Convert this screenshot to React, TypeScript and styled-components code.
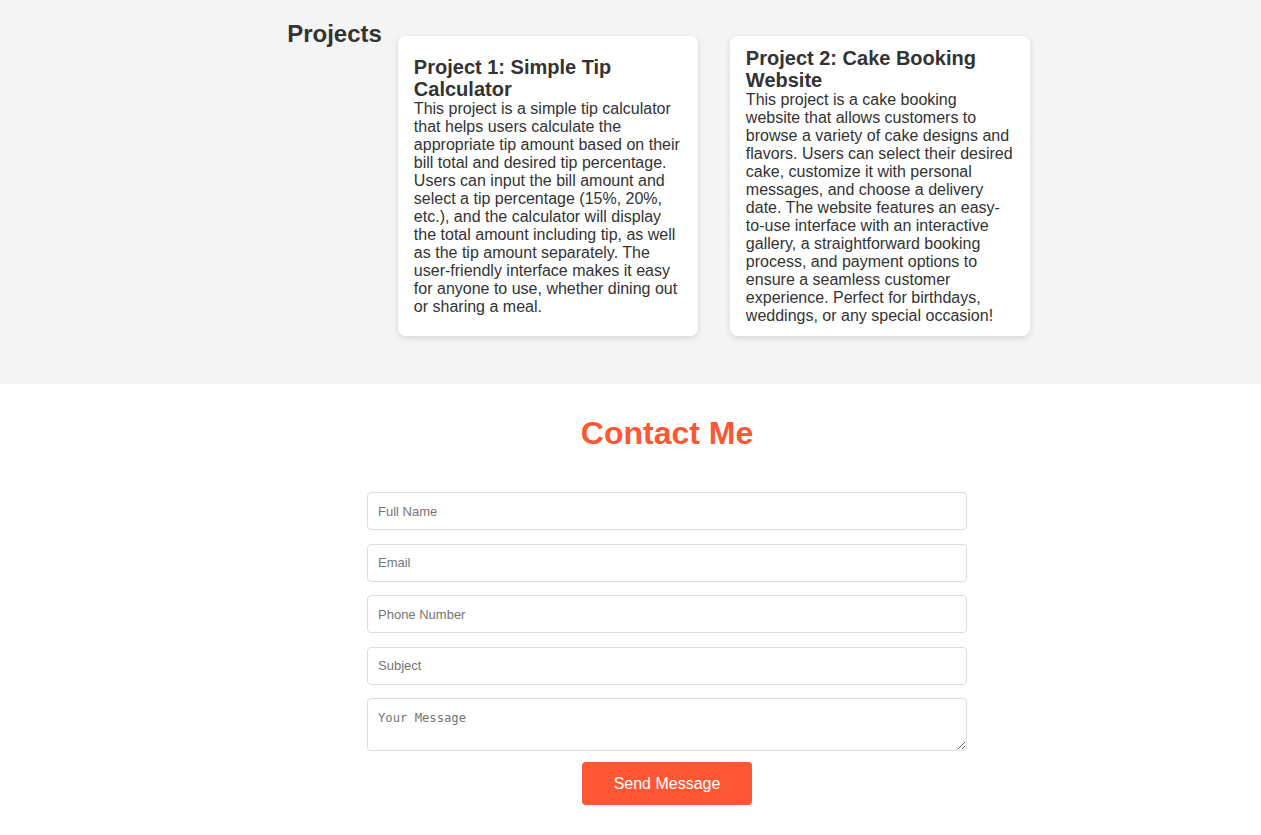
import React from 'react';
import styled, { createGlobalStyle } from 'styled-components';

const GlobalStyle = createGlobalStyle`
  body {
    margin: 0;
    font-family: "Liberation Sans", Arial, sans-serif;
    color: #333;
    background: #fff;
  }
`;

const ProjectsSection = styled.section`
  background: #f4f4f4;
  display: flex;
  justify-content: center;
  align-items: flex-start;
  padding: 20px 0 48px 56px;
`;

const SectionTitle = styled.h2`
  margin: 0 16px 0 0;
  font-size: 24px;
  line-height: 28px;
  font-weight: bold;
  color: #333;
`;

const CardList = styled.div`
  display: flex;
  gap: 32px;
  margin-top: 16px;
`;

const Card = styled.div`
  box-sizing: border-box;
  width: 300px;
  height: 300px;
  padding: 0 16px;
  background: #fff;
  border-radius: 8px;
  box-shadow: 0 2px 6px rgba(0, 0, 0, 0.12);
  display: flex;
  flex-direction: column;
  justify-content: center;
`;

const CardTitle = styled.h3`
  margin: 0;
  font-size: 20px;
  line-height: 22px;
  font-weight: bold;
  color: #333;
`;

const CardText = styled.p`
  margin: 0;
  font-size: 16px;
  line-height: 18px;
  color: #333;
`;

const ContactSection = styled.section`
  padding: 31px 0 30px 73px;
  display: flex;
  flex-direction: column;
  align-items: center;
`;

const ContactTitle = styled.h2`
  margin: 0 0 40px;
  font-size: 32px;
  line-height: 37px;
  font-weight: bold;
  color: #ff5733;
`;

const Form = styled.form`
  width: 600px;
  display: flex;
  flex-direction: column;
  align-items: center;
`;

const Field = styled.input`
  box-sizing: border-box;
  width: 100%;
  height: 38px;
  margin: 0 0 13.5px;
  padding: 10px;
  border: 1px solid #ddd;
  border-radius: 4px;
  font-family: "Liberation Sans", Arial, sans-serif;
  font-size: 13px;
  color: #333;
  &::placeholder {
    color: #757575;
  }
`;

const MessageBox = styled.textarea`
  box-sizing: border-box;
  width: 100%;
  height: 53px;
  margin: 0;
  padding: 11px 10px 10px;
  border: 1px solid #ddd;
  border-radius: 4px;
  font-family: "DejaVu Sans Mono", "Liberation Mono", monospace;
  font-size: 12.2px;
  line-height: 16px;
  display: block;
  &::placeholder {
    color: #757575;
  }
`;

const SendButton = styled.button`
  margin-top: 11px;
  height: 43px;
  padding: 0 32px;
  border: none;
  border-radius: 4px;
  background: #ff5733;
  color: #fff;
  font-family: "Liberation Sans", Arial, sans-serif;
  font-size: 16px;
  cursor: pointer;
`;

const projects = [
  {
    title: 'Project 1: Simple Tip Calculator',
    text: 'This project is a simple tip calculator that helps users calculate the appropriate tip amount based on their bill total and desired tip percentage. Users can input the bill amount and select a tip percentage (15%, 20%, etc.), and the calculator will display the total amount including tip, as well as the tip amount separately. The user-friendly interface makes it easy for anyone to use, whether dining out or sharing a meal.',
  },
  {
    title: 'Project 2: Cake Booking Website',
    text: 'This project is a cake booking website that allows customers to browse a variety of cake designs and flavors. Users can select their desired cake, customize it with personal messages, and choose a delivery date. The website features an easy-to-use interface with an interactive gallery, a straightforward booking process, and payment options to ensure a seamless customer experience. Perfect for birthdays, weddings, or any special occasion!',
  },
];

const App = () => (
  <>
    <GlobalStyle />
    <ProjectsSection>
      <SectionTitle>Projects</SectionTitle>
      <CardList>
        {projects.map(p => (
          <Card key={p.title}>
            <CardTitle>{p.title}</CardTitle>
            <CardText>{p.text}</CardText>
          </Card>
        ))}
      </CardList>
    </ProjectsSection>

    <ContactSection>
      <ContactTitle>Contact Me</ContactTitle>
      <Form onSubmit={e => e.preventDefault()}>
        <Field type="text" placeholder="Full Name" />
        <Field type="email" placeholder="Email" />
        <Field type="tel" placeholder="Phone Number" />
        <Field type="text" placeholder="Subject" />
        <MessageBox placeholder="Your Message" />
        <SendButton type="submit">Send Message</SendButton>
      </Form>
    </ContactSection>
  </>
);

export default App;
